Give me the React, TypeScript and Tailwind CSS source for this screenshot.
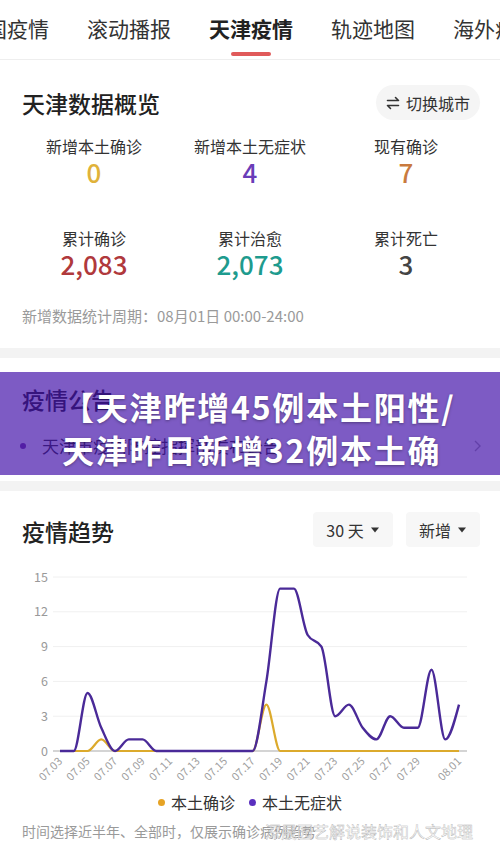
import React from "react";

const purple = [0, 0, 5, 2, 0, 1, 1, 0, 0, 0, 0, 0, 0, 0, 0, 6, 14, 14, 10, 9, 3, 4, 2, 1, 3, 2, 2, 7, 1, 4];
const yellow = purple.map((_, i) => (i === 3 ? 1 : i === 15 ? 4 : 0));

const X0 = 60;
const STEP = (459 - 60) / 29;
const Y0 = 191;
const UNIT = 11.6;
const px = (i: number) => X0 + i * STEP;
const py = (v: number) => Y0 - v * UNIT;

function sign(x: number) {
  return x < 0 ? -1 : 1;
}

function monotonePath(vals: number[]) {
  const pts = vals.map((v, i) => [px(i), py(v)]);
  const n = pts.length;
  const t: number[] = new Array(n).fill(0);
  for (let i = 1; i < n - 1; i++) {
    const [x0, y0] = pts[i - 1];
    const [x1, y1] = pts[i];
    const [x2, y2] = pts[i + 1];
    const h0 = x1 - x0;
    const h1 = x2 - x1;
    const s0 = (y1 - y0) / h0;
    const s1 = (y2 - y1) / h1;
    const p = (s0 * h1 + s1 * h0) / (h0 + h1);
    t[i] = (sign(s0) + sign(s1)) * Math.min(Math.abs(s0), Math.abs(s1), 0.5 * Math.abs(p)) || 0;
  }
  {
    const h = pts[1][0] - pts[0][0];
    t[0] = (3 * (pts[1][1] - pts[0][1]) / h - t[1]) / 2;
    const hl = pts[n - 1][0] - pts[n - 2][0];
    t[n - 1] = (3 * (pts[n - 1][1] - pts[n - 2][1]) / hl - t[n - 2]) / 2;
  }
  let d = `M${pts[0][0]},${pts[0][1]}`;
  for (let i = 0; i < n - 1; i++) {
    const [x0, y0] = pts[i];
    const [x1, y1] = pts[i + 1];
    const dx = (x1 - x0) / 3;
    d += ` C${x0 + dx},${y0 + dx * t[i]} ${x1 - dx},${y1 - dx * t[i + 1]} ${x1},${y1}`;
  }
  return d;
}

const labelIdx = [0, 2, 4, 6, 8, 10, 12, 14, 16, 18, 20, 22, 24, 26, 29];
const dateOf = (i: number) => (i < 29 ? `07.${String(3 + i).padStart(2, "0")}` : "08.01");

function Chart() {
  return (
    <svg width={500} height={230} className="block">
      {[0, 3, 6, 9, 12, 15].map((v) => (
        <g key={v}>
          {v !== 0 && <line x1={53} x2={467} y1={py(v)} y2={py(v)} stroke="#f0f0f0" strokeWidth={1} />}
          <text x={48} y={py(v) + 4.5} textAnchor="end" fontSize={12.5} fill="#999" fontFamily="'Noto Sans CJK SC', sans-serif">
            {v}
          </text>
        </g>
      ))}
      <line x1={53} x2={467} y1={Y0} y2={Y0} stroke="#aaaaaa" strokeWidth={1.2} />
      <path d={monotonePath(yellow)} fill="none" stroke="#dcaa2c" strokeWidth={2.2} />
      <path d={monotonePath(purple)} fill="none" stroke="#4a2a98" strokeWidth={2.4} />
      {labelIdx.map((i) => (
        <text
          key={i}
          x={px(i) + 3}
          y={202}
          textAnchor="end"
          fontSize={11}
          fill="#a0a0a0"
          fontFamily="'Noto Sans CJK SC', sans-serif"
          transform={`rotate(-45 ${px(i) + 3} 202)`}
        >
          {dateOf(i)}
        </text>
      ))}
    </svg>
  );
}

function SwapIcon() {
  return (
    <svg width="14" height="14" viewBox="0 0 14 14" fill="none" stroke="#333" strokeWidth="1.6" strokeLinecap="round" strokeLinejoin="round">
      <path d="M1.5 4.5h11L9.5 1.5" />
      <path d="M12.5 9.5h-11l3 3" />
    </svg>
  );
}

function Caret() {
  return (
    <svg width="10" height="6" viewBox="0 0 10 6">
      <path d="M1 0.5h8L5 5.5z" fill="#333" />
    </svg>
  );
}

function Stat({ label, value, color }: { label: string; value: string; color: string }) {
  return (
    <div className="flex flex-col items-center">
      <div className="text-[16px] leading-[22px] text-[#333]">{label}</div>
      <div className={`text-[26px] leading-[30px] font-medium ${color}`}>{value}</div>
    </div>
  );
}

export default function App() {
  return (
    <div className="w-[500px] h-[846px] overflow-hidden bg-[#f3f3f3] font-['Noto_Sans_CJK_SC',sans-serif]">
      {/* Tabs */}
      <div className="h-[60px] bg-white border-b border-[#eeeeee] overflow-hidden">
        <div className="flex gap-[38px] ml-[-35px] h-[56px] items-center text-[21px] leading-[30px] text-[#333] whitespace-nowrap">
          <span>全国疫情</span>
          <span>滚动播报</span>
          <span className="relative font-bold text-[#222]">
            天津疫情
            <span className="absolute left-1/2 -translate-x-1/2 top-[39px] w-[40px] h-[4px] rounded-full bg-[#e05a5a]" />
          </span>
          <span>轨迹地图</span>
          <span>海外疫情</span>
        </div>
      </div>

      {/* Card 1 */}
      <div className="bg-white pt-[25px] pb-[22px]">
        <div className="flex items-center justify-between h-[35px] pl-[22px] pr-[20px]">
          <div className="text-[23px] leading-[32px] font-medium text-[#222]">天津数据概览</div>
          <div className="h-[35px] w-[104px] rounded-full bg-[#f5f5f5] flex items-center justify-center gap-[6px] text-[16px] text-[#333]">
            <SwapIcon />
            <span>切换城市</span>
          </div>
        </div>
        <div className="grid grid-cols-3 px-[16px] mt-[15px] gap-y-[40px]">
          <Stat label="新增本土确诊" value="0" color="text-[#e0b23a]" />
          <Stat label="新增本土无症状" value="4" color="text-[#6a3db8]" />
          <Stat label="现有确诊" value="7" color="text-[#c97a3e]" />
          <Stat label="累计确诊" value="2,083" color="text-[#b0393c]" />
          <Stat label="累计治愈" value="2,073" color="text-[#1e9b8e]" />
          <Stat label="累计死亡" value="3" color="text-[#444]" />
        </div>
        <div className="mt-[27px] pl-[22px] text-[15px] leading-[20px] text-[#9a9a9a]">新增数据统计周期：08月01日 00:00-24:00</div>
      </div>

      {/* Card 2 */}
      <div className="relative bg-white mt-[10px] pt-[25px] pb-[23px]">
        <div className="pl-[22px] text-[23px] leading-[32px] font-medium text-[#222]">疫情公告</div>
        <div className="mt-[19px] flex items-center pl-[20px] pr-[18px] h-[24px]">
          <span className="w-[6px] h-[6px] rounded-full bg-[#7b3fa0]" />
          <span className="ml-[16px] flex-1 text-[17px] leading-[24px] text-[#333] truncate">天津市疫情防控指挥部发布公告</span>
          <svg width="10" height="14" viewBox="0 0 10 14" fill="none" stroke="#aaa" strokeWidth="1.4">
            <path d="M3 2l5 5-5 5" />
          </svg>
        </div>
        <div className="absolute left-0 right-0 top-[14px] h-[103px] bg-[rgba(64,14,168,0.68)] pl-[62px] pt-[13px]">
          <div className="text-[32px] leading-[43px] font-bold tracking-[1.8px] text-white whitespace-nowrap [text-shadow:0_1px_3px_rgba(0,0,0,0.35)]">
            <div>【天津昨增45例本土阳性/</div>
            <div>天津昨日新增32例本土确</div>
          </div>
        </div>
      </div>

      {/* Card 3 */}
      <div className="bg-white mt-[10px] pt-[21px]">
        <div className="flex items-center justify-between h-[35px] pl-[22px] pr-[20px]">
          <div className="text-[23px] leading-[32px] font-medium text-[#222] mt-[3px]">疫情趋势</div>
          <div className="flex gap-[13px]">
            <div className="h-[35px] w-[80px] rounded-[4px] bg-[#f7f7f7] flex items-center justify-center gap-[6px] text-[16px] text-[#333]">
              <span>30 天</span>
              <Caret />
            </div>
            <div className="h-[35px] w-[74px] rounded-[4px] bg-[#f7f7f7] flex items-center justify-center gap-[6px] text-[16px] text-[#333]">
              <span>新增</span>
              <Caret />
            </div>
          </div>
        </div>
        <div className="mt-[13px]">
          <Chart />
        </div>
        <div className="flex items-center justify-center h-[24px] text-[16px] leading-[24px] text-[#333]">
          <span className="w-[7px] h-[7px] rounded-full bg-[#e6a325]" />
          <span className="ml-[6px]">本土确诊</span>
          <span className="ml-[14px] w-[7px] h-[7px] rounded-full bg-[#5a2fbf]" />
          <span className="ml-[6px]">本土无症状</span>
        </div>
        <div className="relative mt-[7px] pl-[22px] h-[26px] text-[14px] leading-[20px] text-[#9a9a9a] whitespace-nowrap">
          时间选择近半年、全部时，仅展示确诊病例趋势
          <span className="absolute left-[265px] top-[-2px] text-[16px] leading-[24px] text-[rgba(255,255,255,0.75)] [-webkit-text-stroke:0.4px_#b0b0b0]">
            深晟园艺解说装饰和人文地理
          </span>
        </div>
      </div>
    </div>
  );
}
